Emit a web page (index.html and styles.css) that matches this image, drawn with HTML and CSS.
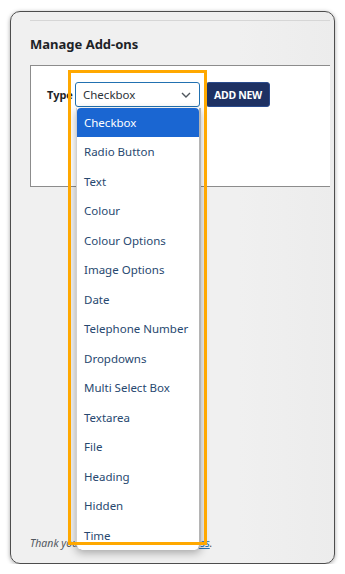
FILE: index.html
```html
<!DOCTYPE html>
<html lang="en">
<head>
  <meta charset="UTF-8">
  <meta name="viewport" content="width=device-width, initial-scale=1.0">
  <title>Manage Add-ons</title>
  <link rel="stylesheet" href="styles.css">
</head>
<body>
  <div class="frame">
    <div class="rule"></div>
    <h2>Manage Add-ons</h2>
    <div class="panel">
      <div class="row">
        <label class="label">Type</label>
        <div class="select">
          <span>Checkbox</span>
          <svg width="10" height="6" viewBox="0 0 10 6"><path d="M1 1l4 4 4-4" fill="none" stroke="#50575e" stroke-width="1.4"/></svg>
        </div>
        <button class="add">ADD NEW</button>
      </div>
    </div>
    <p class="footer">Thank you for creating with <a href="#">WordPress</a>.</p>

    <ul class="dropdown">
      <li class="active">Checkbox</li>
      <li>Radio Button</li>
      <li>Text</li>
      <li>Colour</li>
      <li>Colour Options</li>
      <li>Image Options</li>
      <li>Date</li>
      <li>Telephone Number</li>
      <li>Dropdowns</li>
      <li>Multi Select Box</li>
      <li>Textarea</li>
      <li>File</li>
      <li>Heading</li>
      <li>Hidden</li>
      <li>Time</li>
    </ul>
    <div class="highlight"></div>
  </div>
</body>
</html>
```

FILE: styles.css
```css
body {
  margin: 0;
  background: #fff;
  font-family: 'Noto Sans', 'Open Sans', sans-serif;
}
.frame {
  position: relative;
  box-sizing: border-box;
  width: 325px;
  height: 553px;
  margin: 11px 0 0 10px;
  border: 1.5px solid #4d4d4d;
  border-radius: 10px;
  background: linear-gradient(to right, #f0f0f0 70%, #ececec);
  box-shadow: 0 1px 4px rgba(0, 0, 0, 0.35);
  padding: 0 0 0 19px;
  display: flex;
  flex-direction: column;
  overflow: hidden;
}
.rule {
  height: 1px;
  margin-top: 8px;
  width: 300px;
  background: #d6d6d6;
}
h2 {
  margin: 14px 0 0;
  font-size: 13px;
  font-weight: 700;
  color: #1d2327;
  line-height: 18px;
}
.panel {
  box-sizing: border-box;
  width: 300px;
  height: 122px;
  margin-top: 12px;
  background: #fff;
  border: 1px solid #8c8c8c;
  border-right: none;
  padding: 16px 0 0 16px;
}
.row {
  display: flex;
  align-items: center;
}
.label {
  font-size: 11px;
  font-weight: 700;
  color: #1d2327;
  width: 28px;
}
.select {
  box-sizing: border-box;
  width: 125px;
  height: 25px;
  border: 1px solid #2271b1;
  border-radius: 3px;
  display: flex;
  align-items: center;
  justify-content: space-between;
  padding: 0 8px 0 7px;
  font-size: 11.5px;
  color: #2c3338;
  background: #fff;
}
.add {
  margin-left: 6px;
  height: 25px;
  width: 64px;
  padding: 0;
  border: 1px solid #2a4b8d;
  border-radius: 3px;
  background: #1e3163;
  color: #fff;
  font-family: inherit;
  font-size: 10.5px;
  font-weight: 700;
  letter-spacing: -0.3px;
}
.footer {
  margin: auto 0 13px;
  font-size: 10.5px;
  font-style: italic;
  color: #50575e;
}
.footer a {
  color: #2271b1;
}
.dropdown {
  position: absolute;
  left: 65px;
  top: 95.5px;
  width: 122px;
  margin: 0;
  padding: 0;
  list-style: none;
  background: #fff;
  border-left: 1px solid #d0d0d0;
  border-right: 2px solid #b4b4b4;
  border-radius: 0 0 6px 6px;
  box-shadow: 0 3px 8px rgba(0, 0, 0, 0.3);
}
.dropdown li {
  height: 29.5px;
  line-height: 29.5px;
  padding-left: 7px;
  font-size: 11.5px;
  color: #27486f;
}
.dropdown li.active {
  background: #1a66d2;
  color: #fff;
  border-radius: 4px 4px 0 0;
}
.highlight {
  position: absolute;
  left: 56.5px;
  top: 57.5px;
  width: 133px;
  height: 469px;
  border: 3.5px solid #ffa800;
}
```
